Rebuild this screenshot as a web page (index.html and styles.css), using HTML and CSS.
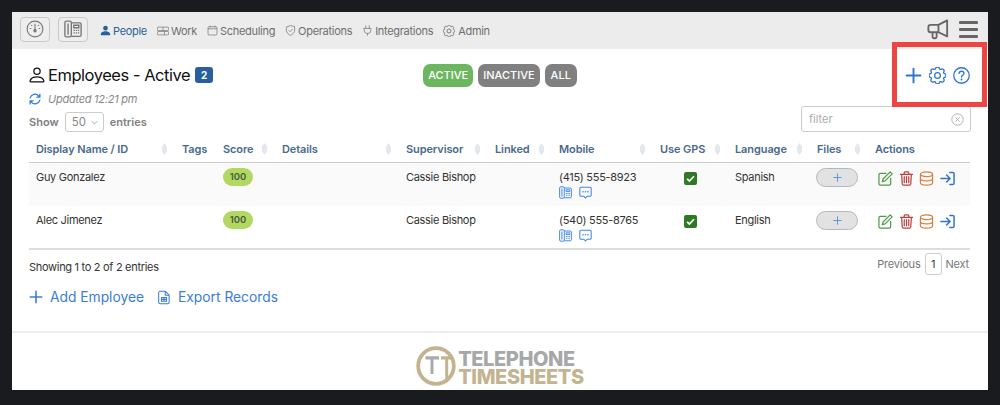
FILE: index.html
```html
<!DOCTYPE html>
<html lang="en">
<head>
<meta charset="utf-8">
<title>Employees - Active</title>
<link rel="stylesheet" href="styles.css">
</head>
<body>
<svg class="defs" aria-hidden="true">
  <symbol id="i-plus" viewBox="0 0 16 16"><path d="M8 1.500v13M1.500 8h13" fill="none" stroke="currentColor" stroke-width="1.800" stroke-linecap="round"/></symbol>
  <symbol id="i-gear" viewBox="0 0 16 16"><g fill="none" stroke="currentColor" stroke-width="1.200"><circle cx="8" cy="8" r="2.700"/><path d="M9.796 1.343c-.527-1.790-3.065-1.790-3.592 0l-.094.319a.873.873 0 0 1-1.255.520l-.292-.160c-1.640-.892-3.433.902-2.540 2.541l.159.292a.873.873 0 0 1-.520 1.255l-.319.094c-1.790.527-1.790 3.065 0 3.592l.319.094a.873.873 0 0 1 .520 1.255l-.160.292c-.892 1.640.901 3.434 2.541 2.540l.292-.159a.873.873 0 0 1 1.255.520l.094.319c.527 1.790 3.065 1.790 3.592 0l.094-.319a.873.873 0 0 1 1.255-.520l.292.160c1.640.893 3.434-.902 2.540-2.541l-.159-.292a.873.873 0 0 1 .520-1.255l.319-.094c1.790-.527 1.790-3.065 0-3.592l-.319-.094a.873.873 0 0 1-.520-1.255l.160-.292c.893-1.640-.902-3.433-2.541-2.540l-.292.159a.873.873 0 0 1-1.255-.520l-.094-.319z"/></g></symbol>
  <symbol id="i-phone" viewBox="0 0 16 16"><g fill="none" stroke="currentColor" stroke-width="1.200"><path d="M6.500 2.500H14a1.200 1.200 0 0 1 1.200 1.200v9.600A1.200 1.200 0 0 1 14 14.500H6.500"/><rect x=".8" y="1" width="5.700" height="14" rx="1.400"/><path d="M3.600 3v10"/><path d="M8.700 4.700h4.500v2.200H8.700z"/></g><path d="M8.500 8.600h1.200v1.100H8.500zM10.500 8.600h1.200v1.100h-1.200zM12.400 8.600h1.100v1.100h-1.100zM8.500 10.800h1.200v1.100H8.500zM10.500 10.800h1.200v1.100h-1.200zM12.400 10.800h1.100v1.100h-1.100z" fill="currentColor"/></symbol>
  <symbol id="i-chat" viewBox="0 0 16 16"><path d="M2.500 1.500h11a1.500 1.500 0 0 1 1.500 1.500v8a1.500 1.500 0 0 1-1.500 1.500H10L8 14.800 6 12.500H2.500A1.500 1.500 0 0 1 1 11V3a1.500 1.500 0 0 1 1.500-1.500z" fill="none" stroke="currentColor" stroke-width="1.300"/><circle cx="5" cy="7" r="1" fill="currentColor"/><circle cx="8" cy="7" r="1" fill="currentColor"/><circle cx="11" cy="7" r="1" fill="currentColor"/></symbol>
  <symbol id="i-edit" viewBox="0 0 16 16"><g fill="none" stroke="currentColor" stroke-width="1.300" stroke-linejoin="round"><path d="M9 2.500H2.500A1.500 1.500 0 0 0 1 4v9.500A1.500 1.500 0 0 0 2.500 15H12a1.500 1.500 0 0 0 1.500-1.500V7.500"/><path d="M13 .9l2.100 2.100-7.600 7.600-2.900.8.800-2.900z"/></g></symbol>
  <symbol id="i-trash" viewBox="0 0 16 16"><g fill="none" stroke="currentColor" stroke-width="1.300" stroke-linecap="round" stroke-linejoin="round"><path d="M1.500 3.500h13M5.500 3.500V2a1 1 0 0 1 1-1h3a1 1 0 0 1 1 1v1.500M2.800 3.500l.7 10.500a1.200 1.200 0 0 0 1.200 1h6.600a1.200 1.200 0 0 0 1.200-1l.7-10.500M5.600 6v6.500M8 6v6.500M10.400 6v6.500"/></g></symbol>
  <symbol id="i-db" viewBox="0 0 16 16"><g fill="none" stroke="currentColor" stroke-width="1.300"><ellipse cx="8" cy="3.400" rx="6.500" ry="2.500"/><path d="M1.500 3.400v9.200c0 1.400 2.900 2.500 6.500 2.500s6.500-1.100 6.500-2.500V3.400M1.500 8c0 1.400 2.900 2.500 6.500 2.500s6.500-1.100 6.500-2.500"/></g></symbol>
  <symbol id="i-login" viewBox="0 0 16 16"><g fill="none" stroke="currentColor" stroke-width="1.600" stroke-linecap="round" stroke-linejoin="round"><path d="M1 8h9.500M7 4.200 10.800 8 7 11.800M10.500 1.500h3a1.500 1.500 0 0 1 1.500 1.500v10a1.500 1.500 0 0 1-1.500 1.500h-3"/></g></symbol>
</svg>

<div class="window">
  <header class="nav">
    <button class="nav-btn" type="button">
      <svg class="ico-nav-btn" viewBox="0 0 16 16"><g fill="none" stroke="currentColor" stroke-width="1"><circle cx="8" cy="8" r="7"/><path d="M8 3.500V9M3.800 7.500h.5M11.700 7.500h.5M5 4.800h.1M11 4.800h.1" stroke-linecap="round"/><circle cx="8" cy="9.500" r="1" fill="currentColor"/></g></svg>
    </button>
    <button class="nav-btn" type="button">
      <svg class="ico-nav-btn" viewBox="0 0 16 16"><use href="#i-phone"/></svg>
    </button>
    <nav class="menu">
      <a class="menu-item is-current"><svg class="ico-menu" viewBox="1 1 14 14"><path fill="currentColor" d="M3 14s-1 0-1-1 1-4 6-4 6 3 6 4-1 1-1 1H3Zm5-6a3 3 0 1 0 0-6 3 3 0 0 0 0 6Z"/></svg>People</a>
      <a class="menu-item"><svg class="ico-menu wide" viewBox="0 0 16 12"><g fill="none" stroke="currentColor" stroke-width=".9"><rect x=".5" y=".8" width="15" height="4.600" rx="1"/><rect x=".5" y="6.600" width="15" height="4.600" rx="1"/><path d="M8 .8v4.600M10 6.600v4.600"/></g></svg>Work</a>
      <a class="menu-item"><svg class="ico-menu" viewBox="0 0 16 16"><g fill="none" stroke="currentColor" stroke-width="1"><rect x="1.500" y="2.500" width="13" height="12" rx="1.500"/><path d="M1.500 5.500h13M4.500 1v2.500M11.500 1v2.500"/></g></svg>Scheduling</a>
      <a class="menu-item"><svg class="ico-menu" viewBox="0 0 16 16"><g fill="none" stroke="currentColor" stroke-width="1" stroke-linejoin="round" stroke-linecap="round"><path d="M8 1 2 2.800v4.400C2 11 5 14 8 15c3-1 6-4 6-7.800V2.800z"/><path d="M5.500 7.800 7.400 9.700l3.200-3.400"/></g></svg>Operations</a>
      <a class="menu-item"><svg class="ico-menu" viewBox="0 0 16 16"><g fill="none" stroke="currentColor" stroke-width="1" stroke-linecap="round"><path d="M5.500 1v4M10.500 1v4M3 5h10v2.500a5 5 0 0 1-10 0zM8 12.500V15"/></g></svg>Integrations</a>
      <a class="menu-item"><svg class="ico-menu large" viewBox="0 0 16 16"><use href="#i-gear"/></svg>Admin</a>
    </nav>
    <div class="nav-right">
      <svg class="ico-horn" viewBox="0 0 24 22"><g fill="none" stroke="currentColor" stroke-width="2" stroke-linejoin="round" stroke-linecap="round"><path d="M22 1 12.500 6H4a2.500 2.500 0 0 0-2.500 2.500v3A2.500 2.500 0 0 0 4 14h8.500L22 18.500zM12.500 6v8M6 14v5a1.500 1.500 0 0 0 1.500 1.500h1.500A1.500 1.500 0 0 0 10.500 19v-5"/></g></svg>
      <span class="burger"><i></i><i></i><i></i></span>
    </div>
  </header>

  <main class="content">
    <div class="title-row">
      <div class="title">
        <svg class="ico-title" viewBox="0 0 16 16"><path fill="currentColor" d="M8 8a3 3 0 1 0 0-6 3 3 0 0 0 0 6Zm2-3a2 2 0 1 1-4 0 2 2 0 0 1 4 0Zm4 8c0 1-1 1-1 1H3s-1 0-1-1 1-4 6-4 6 3 6 4Zm-1-.004c-.001-.246-.154-.986-.832-1.664C11.516 10.680 10.289 10 8 10c-2.290 0-3.516.680-4.168 1.332-.678.678-.830 1.418-.832 1.664h10Z"/></svg>
        <h1>Employees - Active</h1>
        <span class="count">2</span>
      </div>
      <div class="pills">
        <span class="pill pill-on">ACTIVE</span>
        <span class="pill">INACTIVE</span>
        <span class="pill pill-all">ALL</span>
      </div>
      <div class="tools">
        <svg class="ico-tool-plus" viewBox="0 0 16 16"><use href="#i-plus"/></svg>
        <svg class="ico-tool" viewBox="0 0 16 16"><use href="#i-gear"/></svg>
        <svg class="ico-tool" viewBox="0 0 16 16"><g fill="none" stroke="currentColor" stroke-width="1.200" stroke-linecap="round"><circle cx="8" cy="8" r="7.300"/><path d="M5.700 6.100C5.800 4.800 6.800 4 8 4c1.300 0 2.300.9 2.300 2 0 1-.6 1.400-1.300 1.900-.7.500-1 .9-1 1.700"/></g><circle cx="8" cy="11.700" r=".9" fill="currentColor"/></svg>
      </div>
    </div>

    <div class="updated">
      <svg class="ico-sync" viewBox="0 0 16 16"><g fill="none" stroke="currentColor" stroke-width="1.700" stroke-linecap="round" stroke-linejoin="round"><path d="M1.500 6.500A6.700 6.700 0 0 1 13 3.800l1.500 1.700M14.500 1.500v4h-4M14.500 9.500A6.700 6.700 0 0 1 3 12.200l-1.500-1.700M1.500 14.500v-4h4"/></g></svg>
      <em>Updated 12:21 pm</em>
    </div>

    <div class="controls">
      <label class="length">Show
        <span class="select">50<svg class="ico-caret" viewBox="0 0 10 6"><path d="M1 1l4 4 4-4" fill="none" stroke="currentColor"/></svg></span>
        entries</label>
      <div class="filter">
        <span>filter</span>
        <svg class="ico-clear" viewBox="0 0 16 16"><g fill="none" stroke="currentColor" stroke-width="1.100"><circle cx="8" cy="8" r="7"/><path d="M5.500 5.500l5 5M10.500 5.500l-5 5"/></g></svg>
      </div>
    </div>

    <table class="grid">
      <colgroup>
        <col class="c-name"><col class="c-tags"><col class="c-score"><col class="c-details"><col class="c-sup"><col class="c-linked"><col class="c-mobile"><col class="c-gps"><col class="c-lang"><col class="c-files"><col class="c-actions">
      </colgroup>
      <thead>
        <tr>
          <th class="sort">Display Name / ID</th>
          <th>Tags</th>
          <th class="sort">Score</th>
          <th class="sort">Details</th>
          <th class="sort">Supervisor</th>
          <th class="sort">Linked</th>
          <th class="sort">Mobile</th>
          <th class="sort">Use GPS</th>
          <th class="sort">Language</th>
          <th class="sort">Files</th>
          <th>Actions</th>
        </tr>
      </thead>
      <tbody>
        <tr class="odd">
          <td>Guy Gonzalez</td><td></td><td><span class="score">100</span></td><td></td><td>Cassie Bishop</td><td></td>
          <td>(415) 555-8923<div class="contact"><svg class="ico-contact" viewBox="0 0 16 16"><use href="#i-phone"/></svg><svg class="ico-contact" viewBox="0 0 16 16"><use href="#i-chat"/></svg></div></td>
          <td class="center"><span class="check"><svg viewBox="0 0 12 12"><path d="M2.800 6.300 5 8.300 9.200 3.900" fill="none" stroke="currentColor" stroke-width="1.600"/></svg></span></td>
          <td>Spanish</td>
          <td><span class="add-file"><svg viewBox="0 0 16 16"><use href="#i-plus"/></svg></span></td>
          <td><div class="actions"><svg class="a-edit" viewBox="0 0 16 16"><use href="#i-edit"/></svg><svg class="a-trash" viewBox="0 0 16 16"><use href="#i-trash"/></svg><svg class="a-db" viewBox="0 0 16 16"><use href="#i-db"/></svg><svg class="a-login" viewBox="0 0 16 16"><use href="#i-login"/></svg></div></td>
        </tr>
        <tr>
          <td>Alec Jimenez</td><td></td><td><span class="score">100</span></td><td></td><td>Cassie Bishop</td><td></td>
          <td>(540) 555-8765<div class="contact"><svg class="ico-contact" viewBox="0 0 16 16"><use href="#i-phone"/></svg><svg class="ico-contact" viewBox="0 0 16 16"><use href="#i-chat"/></svg></div></td>
          <td class="center"><span class="check"><svg viewBox="0 0 12 12"><path d="M2.800 6.300 5 8.300 9.200 3.900" fill="none" stroke="currentColor" stroke-width="1.600"/></svg></span></td>
          <td>English</td>
          <td><span class="add-file"><svg viewBox="0 0 16 16"><use href="#i-plus"/></svg></span></td>
          <td><div class="actions"><svg class="a-edit" viewBox="0 0 16 16"><use href="#i-edit"/></svg><svg class="a-trash" viewBox="0 0 16 16"><use href="#i-trash"/></svg><svg class="a-db" viewBox="0 0 16 16"><use href="#i-db"/></svg><svg class="a-login" viewBox="0 0 16 16"><use href="#i-login"/></svg></div></td>
        </tr>
      </tbody>
    </table>

    <div class="table-foot">
      <span class="info">Showing 1 to 2 of 2 entries</span>
      <div class="pager"><span>Previous</span><span class="page">1</span><span>Next</span></div>
    </div>

    <div class="links">
      <a class="link"><svg class="ico-link-plus" viewBox="0 0 16 16"><use href="#i-plus"/></svg>Add Employee</a>
      <a class="link"><svg class="ico-link-file" viewBox="0 0 14 16"><g fill="none" stroke="currentColor" stroke-width="1.200" stroke-linejoin="round"><path d="M2.500 .8H8.700L13 5.100V13.500a1.700 1.700 0 0 1-1.700 1.700H2.500A1.700 1.700 0 0 1 .8 13.500V2.500A1.700 1.700 0 0 1 2.500 .8zM8.500 .8v4.500H13"/><path d="M4 8h6v4.500H4zM4 10.200h6M7 8v4.500"/></g></svg>Export Records</a>
    </div>
  </main>

  <footer class="foot">
    <div class="logo">
      <svg class="logo-mark" viewBox="0 0 40 40">
        <circle cx="20" cy="20" r="17.800" fill="none" stroke="#c3b38f" stroke-width="3.800"/>
        <path d="M9.500 10.300h13.500v3.200h-5.500V28h-3V13.500h-5z" fill="#a9aaac"/>
        <path d="M25 10.300h10.500v3.200h-3.300V36h-3V13.500H25z" fill="#c3b38f"/>
      </svg>
      <div class="logo-text"><span class="l-top">TELEPHONE</span><span class="l-bot">TIMESHEETS</span></div>
    </div>
  </footer>
</div>

<div class="callout" aria-hidden="true"></div>
</body>
</html>
```

FILE: styles.css
```css
* { box-sizing: border-box; }
html, body { height: 100%; }
body {
  margin: 0;
  padding: 12px;
  background: #1a1b1e;
  font-family: Inter, "Noto Sans", "Liberation Sans", sans-serif;
  font-size: 11px;
  color: #333;
  overflow: hidden;
  position: relative;
}
.defs { display: none; }
svg { display: block; flex: none; }

.window {
  width: 976px;
  height: 378px;
  background: #fff;
  display: flex;
  flex-direction: column;
}

/* nav */
.nav {
  height: 37px;
  background: #ececec;
  display: flex;
  align-items: center;
  padding: 0 10px 3px 8px;
  flex: none;
}
.nav-btn {
  width: 30px;
  height: 25px;
  margin-right: 8px;
  padding: 0;
  border: 1px solid #c9c9c9;
  border-radius: 4px;
  background: #eee;
  color: #777;
  display: flex;
  align-items: center;
  justify-content: center;
}
.ico-nav-btn { width: 18px; height: 18px; }
.menu { display: flex; align-items: center; gap: 10px; margin-left: 4px; padding-top: 3px; }
.menu-item { display: flex; align-items: center; gap: 2px; color: #6f6f6f; font-size: 11px; letter-spacing: -.3px; }
.menu-item.is-current { color: #2a5f9e; }
.ico-menu { width: 11px; height: 11px; }
.ico-menu.wide { width: 12px; height: 10px; }
.ico-menu.large { width: 12px; height: 12px; margin-right: 1px; }
.nav-right { margin-left: auto; display: flex; align-items: center; gap: 10px; color: #666; }
.ico-horn { width: 22px; height: 21px; }
.burger { display: flex; flex-direction: column; gap: 4px; width: 19px; }
.burger i { display: block; height: 3px; border-radius: 1px; background: #666; }

/* content */
.content { padding: 0 17px; flex: 1; display: flex; flex-direction: column; }
.title-row {
  display: grid;
  grid-template-columns: 1fr auto 1fr;
  align-items: center;
  margin-top: 14px;
  height: 24px;
}
.title { display: flex; align-items: center; color: #111; }
.ico-title { width: 20px; height: 20px; margin-left: -2px; margin-right: 1px; }
h1 { margin: 0; font-size: 16.500px; font-weight: 400; line-height: 24px; color: #111; letter-spacing: -.47px; }
.count {
  margin-left: 5px;
  width: 18px;
  height: 16px;
  background: #2a5f9e;
  border-radius: 3px;
  color: #fff;
  font-size: 10px;
  font-weight: 700;
  display: flex;
  align-items: center;
  justify-content: center;
}
.pills { display: flex; gap: 5px; }
.pill {
  height: 23px;
  padding: 0 5px;
  border-radius: 7px;
  background: #808080;
  color: #fff;
  font-size: 11px;
  font-weight: 500;
  display: flex;
  align-items: center;
}
.pill-on { background: #6cb65f; }
.pill-all { padding: 0 6px; }
.tools { display: flex; justify-content: flex-end; align-items: center; gap: 7px; color: #2f74d0; padding-right: 1px; }
.ico-tool-plus { width: 17px; height: 17px; }
.ico-tool { width: 17px; height: 17px; }

.updated { display: flex; align-items: center; gap: 7px; margin-top: 4px; height: 16px; color: #888; font-size: 11px; letter-spacing: -.25px; }
.ico-sync { width: 12px; height: 12px; color: #2f7ae0; }

.controls { display: flex; justify-content: space-between; align-items: flex-end; margin-top: -1px; height: 27px; }
.length { display: flex; align-items: center; gap: 6px; font-weight: 600; color: #808080; font-size: 11px; margin-bottom: 1px; }
.select {
  width: 39px;
  height: 20px;
  border: 1px solid #ccc;
  border-radius: 3px;
  padding: 0 5px 0 6px;
  display: flex;
  align-items: center;
  justify-content: space-between;
  font-weight: 400;
  color: #888;
  font-size: 11.500px;
}
.ico-caret { width: 7px; height: 5px; color: #888; }
.filter {
  width: 170px;
  height: 26px;
  margin-bottom: 1px;
  border: 1px solid #ccc;
  border-radius: 3px;
  padding: 0 6px 0 7px;
  display: flex;
  align-items: center;
  justify-content: space-between;
  color: #aaa;
  font-size: 11px;
}
.ico-clear { width: 13px; height: 13px; color: #aaa; }

/* table */
.grid { width: 941px; table-layout: fixed; border-collapse: collapse; margin-top: 4px; }
.c-name { width: 146px; } .c-tags { width: 41px; } .c-score { width: 59px; } .c-details { width: 124px; }
.c-sup { width: 89px; } .c-linked { width: 64px; } .c-mobile { width: 101px; } .c-gps { width: 75px; }
.c-lang { width: 82px; } .c-files { width: 58px; } .c-actions { width: 102px; }
.grid th {
  height: 25px;
  padding: 0 7px;
  border-bottom: 1px solid #ccc;
  text-align: left;
  font-size: 11px;
  font-weight: 600;
  color: #4a6a8c;
  white-space: nowrap;
  letter-spacing: -.1px;
  position: relative;
}
.grid td.center { text-align: center; }
.grid th.sort::after {
  content: "";
  position: absolute;
  right: 8px;
  top: 6px;
  width: 5px;
  height: 12px;
  background: #e3e8ee;
  clip-path: polygon(50% 0, 100% 30%, 100% 70%, 50% 100%, 0 70%, 0 30%);
}
.grid td {
  height: 43.500px;
  padding: 7px 7px 0;
  vertical-align: top;
  font-size: 11px;
  line-height: 14px;
  color: #333;
  white-space: nowrap;
  letter-spacing: -.3px;
}
.grid tr.odd td { background: #fafafa; }
.grid tbody tr:last-child td { border-bottom: 2px solid #ddd; height: 43.500px; }
.score {
  display: inline-block;
  width: 30px;
  height: 18px;
  margin-top: -2px;
  border-radius: 9px;
  background: #b1d962;
  color: #4a5a3a;
  font-size: 9.500px;
  font-weight: 600;
  line-height: 18px;
  text-align: center;
  vertical-align: top;
  letter-spacing: 0;
}
.contact { display: flex; gap: 7px; margin-top: 2px; color: #3f86ea; }
.ico-contact { width: 13px; height: 13px; }
.check {
  display: inline-flex;
  width: 13px;
  height: 13px;
  margin-top: 2px;
  background: #2e7a24;
  border-radius: 2px;
  color: #fff;
}
.check svg { width: 13px; height: 13px; }
.add-file {
  display: flex;
  align-items: center;
  justify-content: center;
  width: 42px;
  height: 19px;
  margin-top: -2px;
  margin-left: -1px;
  border: 1px solid #b3b9c2;
  border-radius: 10px;
  background: #e2e2e2;
  color: #5e96dc;
}
.add-file svg { width: 9px; height: 9px; }
.actions { display: flex; gap: 5.500px; margin-top: 1px; margin-left: 3px; }
.actions svg { width: 15px; height: 15px; }
.a-edit { color: #4b9c45; }
.a-trash { color: #b5423f; }
.a-db { color: #d98040; }
.a-login { color: #2f74d0; }

.table-foot { display: flex; justify-content: space-between; align-items: flex-start; margin-top: 3px; }
.info { margin-top: 7px; font-size: 11px; color: #333; line-height: 14px; letter-spacing: -.3px; }
.pager { display: flex; align-items: center; gap: 4px; color: #777; font-size: 11px; padding-right: 2px; letter-spacing: -.2px; }
.page { width: 17px; height: 22px; border: 1px solid #ccc; border-radius: 3px; display: flex; align-items: center; justify-content: center; color: #444; }

.links { display: flex; gap: 14px; margin-top: 12px; }
.link { display: flex; align-items: center; color: #3a7cd6; font-size: 13.800px; line-height: 20px; }
.ico-link-plus { width: 14px; height: 14px; margin-right: 7px; }
.ico-link-file { width: 12px; height: 15px; margin-right: 8px; }

/* footer */
.foot {
  flex: none;
  height: 59px;
  border-top: 2px solid #ececec;
  display: flex;
  justify-content: center;
  padding-top: 13px;
  overflow: hidden;
}
.logo { display: flex; gap: 2px; align-items: flex-start; height: 40px; }
.logo-mark { width: 40px; height: 40px; }
.logo-text { display: flex; flex-direction: column; font-family: Inter, "Liberation Sans", sans-serif; font-weight: 800; font-size: 20px; line-height: 18px; letter-spacing: -.4px; margin-top: 4px; }
.l-top { color: #a6a7a9; }
.l-bot { color: #c3b38f; }

/* annotation over the screenshot */
.callout {
  position: absolute;
  left: 892px;
  top: 42px;
  width: 95px;
  height: 65px;
  border: 5px solid #ef4444;
  pointer-events: none;
}
```
